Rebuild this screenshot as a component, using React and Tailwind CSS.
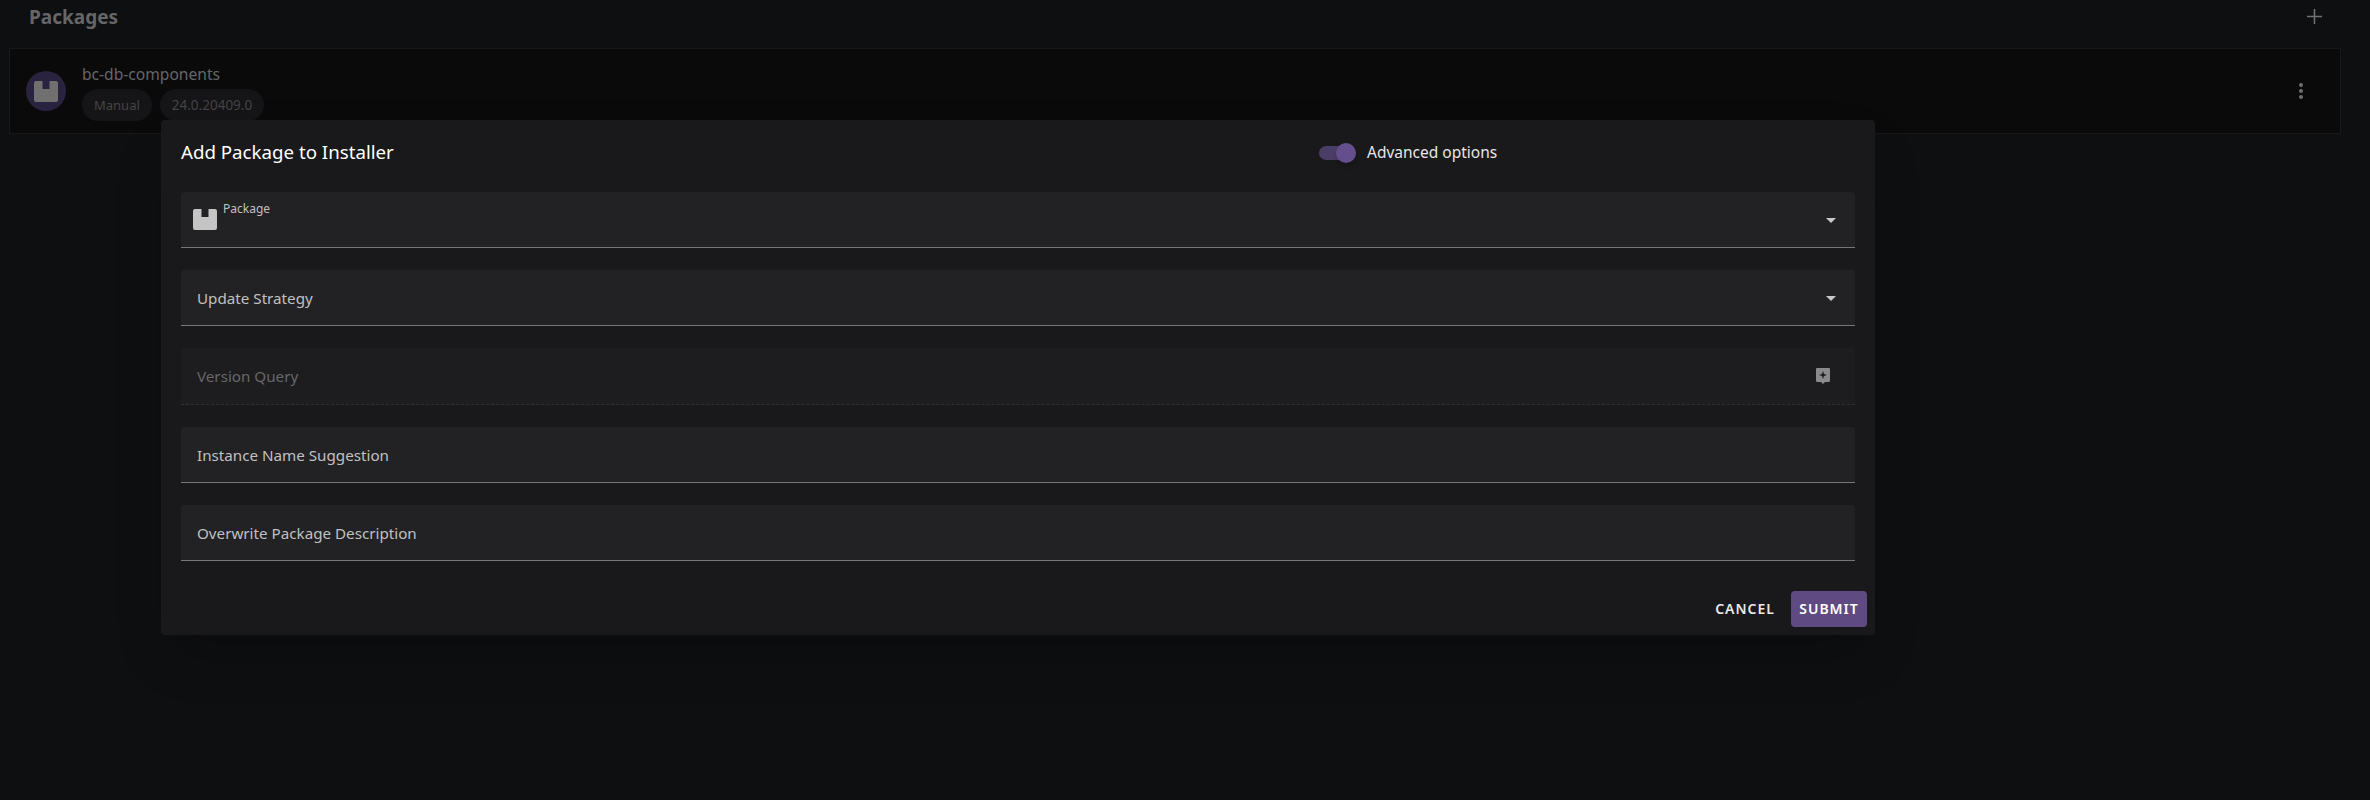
import React from 'react';

const PackageIcon = ({ className }) => (
  <svg viewBox="0 0 24 21" className={className} fill="currentColor">
    <path d="M2 0h6.5v8h7V0H22a2 2 0 0 1 2 2v17a2 2 0 0 1-2 2H2a2 2 0 0 1-2-2V2a2 2 0 0 1 2-2z" />
  </svg>
);

const Caret = () => (
  <svg viewBox="0 0 10 5" className="w-[10px] h-[5px] mt-[1px] text-[#c8c8c8]" fill="currentColor">
    <path d="M0 0h10L5 5z" />
  </svg>
);

const ReviewIcon = () => (
  <svg viewBox="0 0 14 16" className="w-[14px] h-[16px] text-[#8a8a8a]" fill="currentColor">
    <path
      fillRule="evenodd"
      d="M1.2 0h11.6C13.5 0 14 .5 14 1.2v11.6c0 .7-.5 1.2-1.2 1.2H9l-2 2-2-2H1.2C.5 14 0 13.5 0 12.8V1.2C0 .5.5 0 1.2 0zM7 3l-1 3-3 1 3 1 1 3 1-3 3-1-3-1z"
    />
  </svg>
);

const Field = ({ label }) => (
  <div className="h-[56px] rounded-t flex items-center pl-[16px] pr-[19px] bg-[#222224] border-b border-[#77777a]">
    <span className="text-[15.2px] leading-[24px] pt-[1px] text-[#c0c0c2]">{label}</span>
  </div>
);

const App = () => {
  return (
    <div className="relative w-[2370px] h-[800px] overflow-hidden bg-[#0e0f11] font-['Noto_Sans',sans-serif]">
      {/* Page behind the dialog */}
      <div className="flex items-center justify-between h-[34px] pl-[29px] pr-[48px]">
        <h1 className="text-[19px] font-bold text-[#666668]">Packages</h1>
        <svg viewBox="0 0 15 15" className="w-[15px] h-[15px] -mt-[2px] text-[#707072]" fill="currentColor">
          <path d="M6.7 0h1.6v6.7H15v1.6H8.3V15H6.7V8.3H0V6.7h6.7z" />
        </svg>
      </div>
      <div className="mt-[14px] mx-[9px] w-[2332px] h-[86px] flex items-center bg-[#0a0a0b] border border-[#18181a] pl-[16px] pr-[37px]">
        <div className="w-[40px] h-[40px] rounded-full bg-[#2a2340] flex items-center justify-center">
          <PackageIcon className="w-[24px] h-[21px] text-[#707070]" />
        </div>
        <div className="ml-[16px] flex flex-col gap-[4px] grow mt-[2px]">
          <span className="text-[15.6px] leading-[21px] text-[#666668]">bc-db-components</span>
          <div className="flex gap-[8px]">
            <span className="h-[32px] px-[12px] rounded-full bg-[#151517] text-[13px] leading-[32px] text-[#444446]">Manual</span>
            <span className="h-[32px] px-[12px] rounded-full bg-[#151517] text-[13.5px] leading-[32px] text-[#444446]">24.0.20409.0</span>
          </div>
        </div>
        <div className="flex flex-col gap-[2px]">
          <span className="w-[4px] h-[4px] rounded-full bg-[#707070]" />
          <span className="w-[4px] h-[4px] rounded-full bg-[#707070]" />
          <span className="w-[4px] h-[4px] rounded-full bg-[#707070]" />
        </div>
      </div>

      {/* Dialog */}
      <div className="absolute left-[161px] top-[120px] w-[1714px] h-[515px] rounded bg-[#19191b] px-[20px] shadow-2xl">
        <div className="h-[72px] pb-[7px] flex items-center">
          <h2 className="w-[1138px] text-[18.7px] text-white">Add Package to Installer</h2>
          <div className="relative w-[34px] h-[14px] rounded-full bg-[#4a3d66]">
            <span className="absolute -right-[3px] -top-[3px] w-[20px] h-[20px] rounded-full bg-[#644f8c] shadow-md" />
          </div>
          <span className="ml-[14px] text-[15.5px] text-[#e6e6e6]">Advanced options</span>
        </div>

        <div className="flex flex-col gap-[22px]">
          <div className="h-[56px] rounded-t flex items-center pl-[12px] pr-[19px] bg-[#222224] border-b border-[#77777a]">
            <PackageIcon className="w-[24px] h-[21px] text-[#c4c4c4]" />
            <span className="self-start mt-[9px] ml-[6px] text-[12px] leading-[16px] text-[#c0c0c2] grow">Package</span>
            <Caret />
          </div>
          <div className="h-[56px] rounded-t flex items-center justify-between pl-[16px] pr-[19px] bg-[#222224] border-b border-[#77777a]">
            <span className="text-[15.2px] leading-[24px] pt-[1px] text-[#c0c0c2]">Update Strategy</span>
            <Caret />
          </div>
          <div className="h-[57px] rounded-t flex items-center justify-between pl-[16px] pr-[25px] bg-[#1d1d1f] border-b border-dashed border-[#303032]">
            <span className="text-[15.2px] text-[#66666a]">Version Query</span>
            <ReviewIcon />
          </div>
          <Field label="Instance Name Suggestion" />
          <Field label="Overwrite Package Description" />
        </div>

        <div className="mt-[30px] -mr-[12px] flex items-center justify-end gap-[8px]">
          <button className="h-[36px] px-[8px] pb-[2px] text-[14px] font-semibold tracking-[1px] text-[#e8e8e8]">CANCEL</button>
          <button className="h-[36px] w-[76px] pb-[2px] rounded bg-[#5f4b82] text-[14px] font-semibold tracking-[1px] text-white">SUBMIT</button>
        </div>
      </div>
    </div>
  );
};

export default App;
